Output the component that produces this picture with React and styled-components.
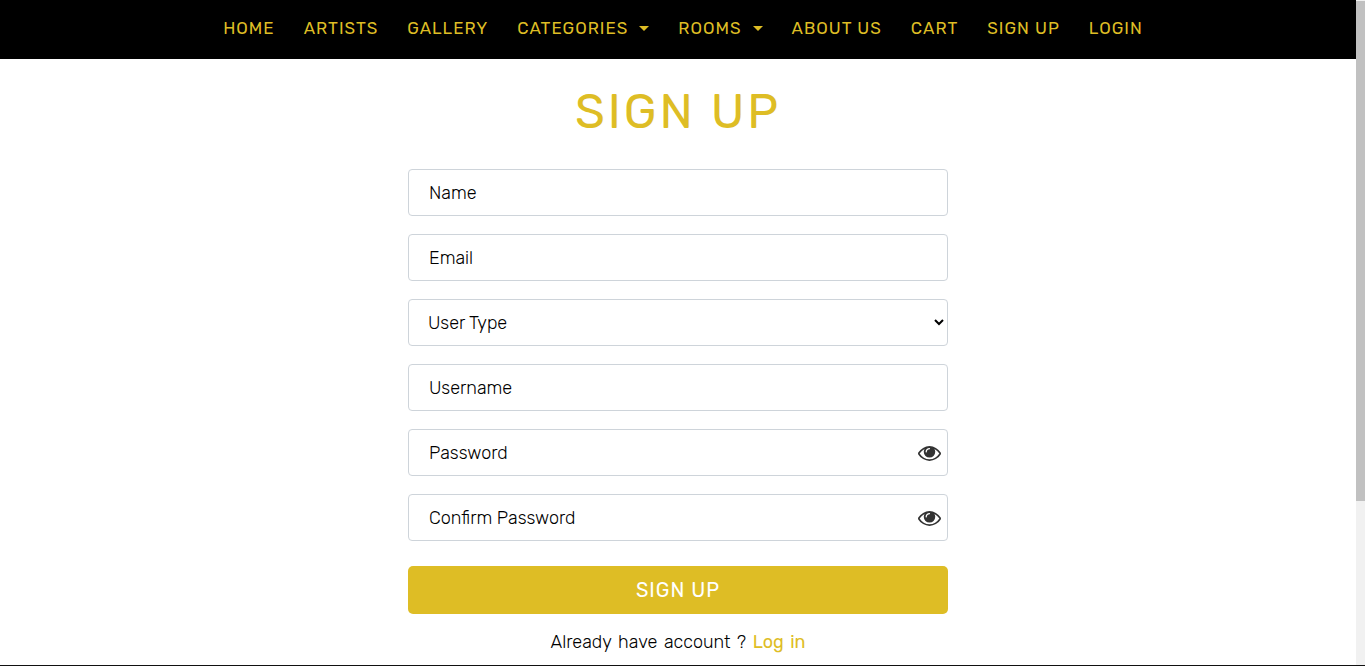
import React, { useState } from "react";
import styled, { createGlobalStyle } from "styled-components";

const gold = "#debd25";

const GlobalStyle = createGlobalStyle`
  *, *::before, *::after { box-sizing: border-box; }
  body {
    margin: 0;
    background: #fff;
    color: #000;
    font-family: Rubik, Roboto, sans-serif;
    font-weight: 300;
  }
`;

const Screen = styled.div`
  display: flex;
  min-height: 100vh;
  border-bottom: 1px solid #111;
`;

const Page = styled.div`
  flex: 1;
  min-width: 0;
`;

const ScrollTrack = styled.div`
  display: flex;
  flex-direction: column;
  flex: 0 0 9px;
  padding-top: 1px;
  background: #f1f1f1;
`;

const ScrollThumb = styled.div`
  height: 75vh;
  background: #c1c1c1;
`;

const NavBar = styled.nav`
  display: flex;
  flex-wrap: wrap;
  justify-content: center;
  column-gap: 29px;
  padding: 13px 0 16px 10px;
  background: #000;
`;

const NavLink = styled.a`
  display: flex;
  align-items: center;
  gap: 11px;
  color: ${gold};
  font-size: 17px;
  font-weight: 400;
  line-height: 30px;
  letter-spacing: 1px;
  text-decoration: none;
  white-space: nowrap;
`;

const Caret = styled.span`
  border: 5px solid transparent;
  border-top-color: ${gold};
  border-bottom: 0;
`;

const Main = styled.main`
  width: 100%;
  max-width: 572px;
  margin: 0 auto;
  padding: 23px 16px 8px;
`;

const Title = styled.h1`
  margin: 0 0 27px;
  color: ${gold};
  font-size: 48px;
  font-weight: 400;
  line-height: 60px;
  letter-spacing: 3px;
  text-align: center;
`;

const Form = styled.form`
  display: flex;
  flex-direction: column;
  gap: 18px;
`;

const Field = styled.div`
  display: grid;
  align-items: center;
  grid-template-columns: 1fr 37px;
`;

const Input = styled.input`
  grid-column: 1 / -1;
  grid-row: 1;
  width: 100%;
  height: 47px;
  padding: 0 20px;
  border: 1px solid #ced4da;
  border-radius: 4px;
  background: #fff;
  color: #000;
  font: inherit;
  font-size: 18px;

  &::placeholder {
    color: #000;
    opacity: 1;
  }
`;

const Select = styled(Input)`
  padding: 0 1px 0 15px;
`;

const EyeButton = styled.button`
  grid-column: 2;
  grid-row: 1;
  display: flex;
  justify-content: center;
  padding: 2px 0 0;
  border: 0;
  background: transparent;
  color: #333;
  cursor: pointer;
`;

const Submit = styled.button`
  height: 48px;
  margin-top: 7px;
  border: 0;
  border-radius: 5px;
  background: ${gold};
  color: #fff;
  font: inherit;
  font-size: 20px;
  font-weight: 400;
  letter-spacing: 1px;
  cursor: pointer;
`;

const Prompt = styled.p`
  margin: 16px 0 0;
  font-size: 18px;
  line-height: 24px;
  word-spacing: 2px;
  text-align: center;
`;

const LoginLink = styled.a`
  color: ${gold};
  font-weight: 400;
  text-decoration: none;
`;

const links = [
  { label: "HOME" },
  { label: "ARTISTS" },
  { label: "GALLERY" },
  { label: "CATEGORIES", menu: true },
  { label: "ROOMS", menu: true },
  { label: "ABOUT US" },
  { label: "CART" },
  { label: "SIGN UP" },
  { label: "LOGIN" },
];

function EyeIcon() {
  return (
    <svg width="23" height="23" viewBox="0 64 1792 1792" fill="currentColor" aria-hidden="true">
      <path d="M1664 960q-152-236-381-353 61 104 61 225 0 185-131.5 316.5t-316.5 131.5-316.5-131.5-131.5-316.5q0-121 61-225-229 117-381 353 133 205 333.5 326.5t434.5 121.5 434.5-121.5 333.5-326.5zM944 576q0-20-14-34t-34-14q-125 0-214.5 89.5t-89.5 214.5q0 20 14 34t34 14 34-14 14-34q0-86 61-147t147-61q20 0 34-14t14-34zM1792 960q0 34-20 69-140 230-376.5 368.5t-499.5 138.5-499.5-139-376.5-368q-20-35-20-69t20-69q140-229 376.5-368t499.5-139 499.5 139 376.5 368q20 35 20 69z" />
    </svg>
  );
}

function TextField({ id, label, type = "text" }) {
  return (
    <Field>
      <Input id={id} name={id} type={type} placeholder={label} aria-label={label} />
    </Field>
  );
}

function PasswordField({ id, label }) {
  const [visible, setVisible] = useState(false);
  return (
    <Field>
      <Input
        id={id}
        name={id}
        type={visible ? "text" : "password"}
        placeholder={label}
        aria-label={label}
      />
      <EyeButton type="button" aria-label="Show password" onClick={() => setVisible(!visible)}>
        <EyeIcon />
      </EyeButton>
    </Field>
  );
}

export default function App() {
  return (
    <>
      <GlobalStyle />
      <Screen>
        <Page>
          <NavBar>
            {links.map(({ label, menu }) => (
              <NavLink key={label} href="#">
                {label}
                {menu && <Caret />}
              </NavLink>
            ))}
          </NavBar>
          <Main>
            <Title>SIGN UP</Title>
            <Form onSubmit={(event) => event.preventDefault()}>
              <TextField id="name" label="Name" />
              <TextField id="email" label="Email" type="email" />
              <Field>
                <Select as="select" id="user-type" name="user-type" aria-label="User Type">
                  <option>User Type</option>
                </Select>
              </Field>
              <TextField id="username" label="Username" />
              <PasswordField id="password" label="Password" />
              <PasswordField id="confirm" label="Confirm Password" />
              <Submit type="submit">SIGN UP</Submit>
            </Form>
            <Prompt>
              Already have account ? <LoginLink href="#">Log in</LoginLink>
            </Prompt>
          </Main>
        </Page>
        <ScrollTrack aria-hidden="true">
          <ScrollThumb />
        </ScrollTrack>
      </Screen>
    </>
  );
}
